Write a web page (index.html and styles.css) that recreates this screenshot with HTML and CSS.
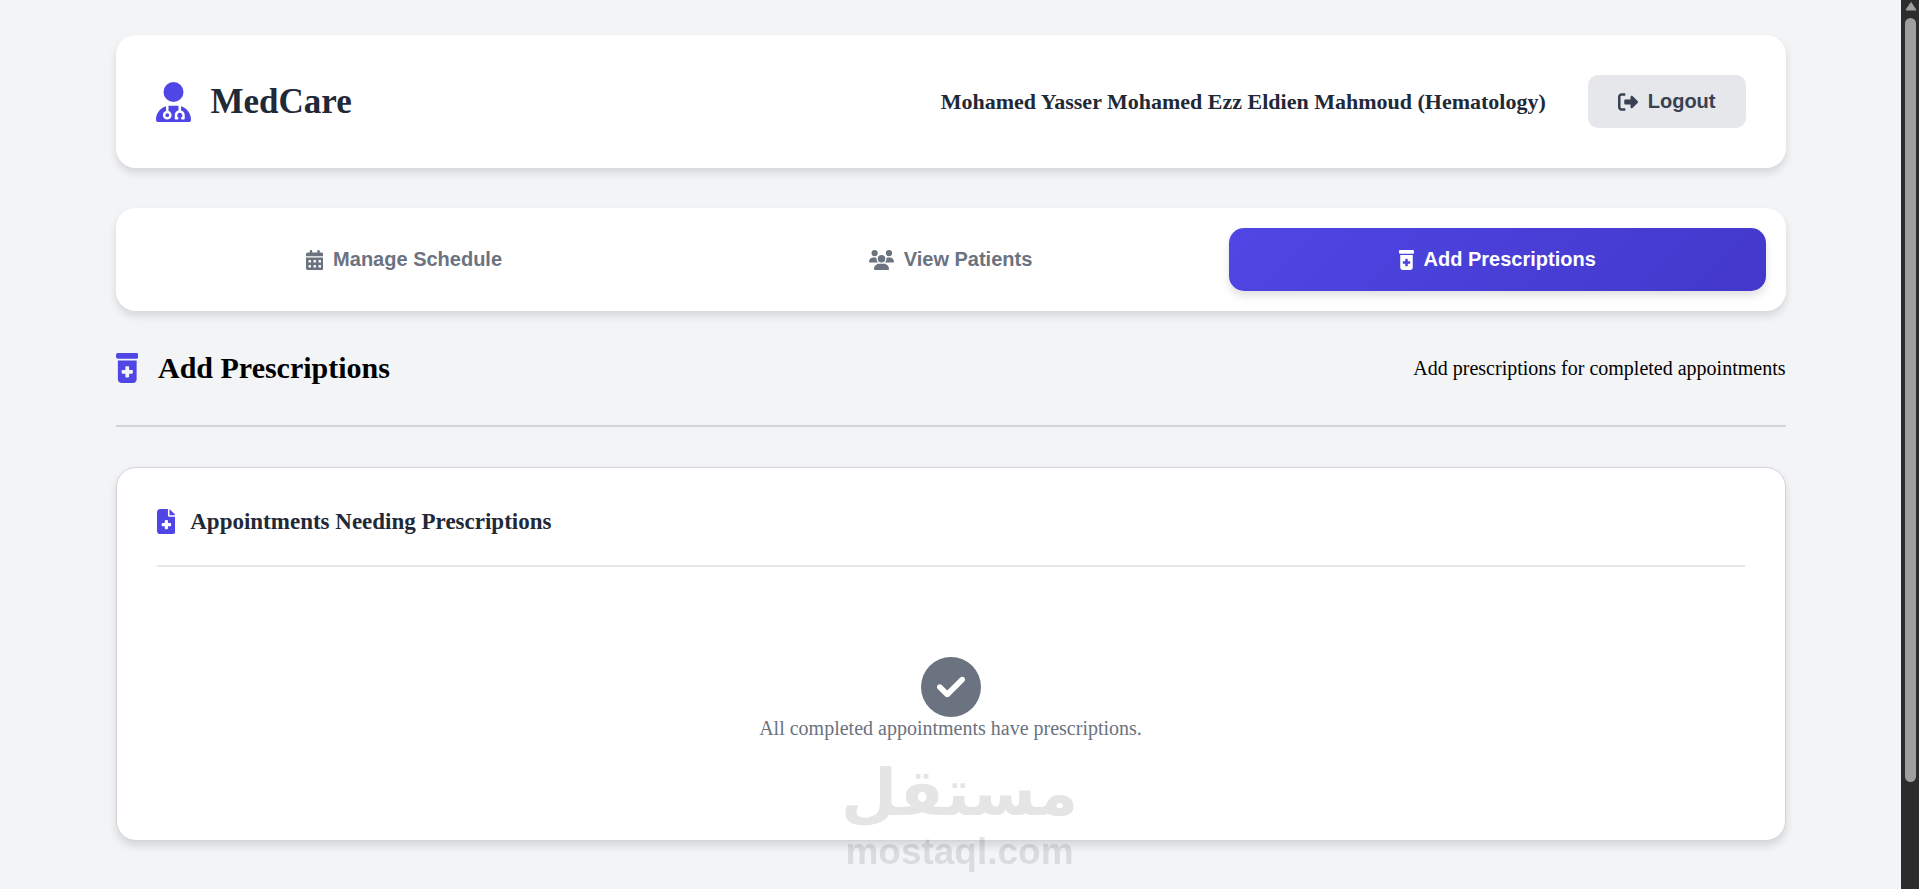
FILE: index.html
```html
<!DOCTYPE html>
<html lang="en">

<head>
    <meta charset="UTF-8">
    <meta name="viewport" content="width=device-width, initial-scale=1.0">
    <title>MedCare - Add Prescriptions</title>
    <link rel="stylesheet" href="styles.css">
</head>

<body>
    <div class="container">
        <header class="header">
            <div class="logo">
                <svg class="icon" viewBox="0 0 448 512" aria-hidden="true">
                    <path d="M224 256A128 128 0 1 0 224 0a128 128 0 1 0 0 256zm-96 55.2C54 332.9 0 401.3 0 482.3C0 498.7 13.3 512 29.7 512H418.3c16.4 0 29.7-13.3 29.7-29.7c0-81-54-149.4-128-171.1V362c27.6 7.1 48 32.2 48 62v40c0 8.8-7.2 16-16 16H336c-8.8 0-16-7.2-16-16s7.2-16 16-16V424c0-17.7-14.3-32-32-32s-32 14.3-32 32v24c8.8 0 16 7.2 16 16s-7.2 16-16 16H256c-8.8 0-16-7.2-16-16V424c0-29.8 20.4-54.9 48-62V304.9c-6-.6-12.1-.9-18.3-.9H178.3c-6.2 0-12.3 .3-18.3 .9v65.4c23.1 6.9 40 28.3 40 53.7c0 30.9-25.1 56-56 56s-56-25.1-56-56c0-25.4 16.9-46.8 40-53.7V311.2zM144 448a24 24 0 1 0 0-48 24 24 0 1 0 0 48z" />
                </svg>
                <h1>MedCare</h1>
            </div>
            <div class="user-info">
                <span class="user-name">Mohamed Yasser Mohamed Ezz Eldien Mahmoud (Hematology)</span>
                <button type="button" class="logout-btn">
                    <svg class="icon" viewBox="0 0 512 512" aria-hidden="true">
                        <path d="M377.9 105.9L500.7 228.7c7.2 7.2 11.3 17.1 11.3 27.3s-4.1 20.1-11.3 27.3L377.9 406.1c-6.4 6.4-15 9.9-24 9.9c-18.7 0-33.9-15.2-33.9-33.9l0-62.1-128 0c-17.7 0-32-14.3-32-32l0-64c0-17.7 14.3-32 32-32l128 0 0-62.1c0-18.7 15.2-33.9 33.9-33.9c9 0 17.6 3.6 24 9.9zM160 96L96 96c-17.7 0-32 14.3-32 32l0 256c0 17.7 14.3 32 32 32l64 0c17.7 0 32 14.3 32 32s-14.3 32-32 32l-64 0c-53 0-96-43-96-96L0 128C0 75 43 32 96 32l64 0c17.7 0 32 14.3 32 32s-14.3 32-32 32z" />
                    </svg>
                    Logout
                </button>
            </div>
        </header>

        <nav class="tabs">
            <button type="button" class="tab">
                <svg class="icon" viewBox="0 0 448 512" aria-hidden="true">
                    <path d="M128 0c17.7 0 32 14.3 32 32V64H288V32c0-17.7 14.3-32 32-32s32 14.3 32 32V64h48c26.5 0 48 21.5 48 48v48H0V112C0 85.5 21.5 64 48 64H96V32c0-17.7 14.3-32 32-32zM0 192H448V464c0 26.5-21.5 48-48 48H48c-26.5 0-48-21.5-48-48V192zm64 80v32c0 8.8 7.2 16 16 16h32c8.8 0 16-7.2 16-16V272c0-8.8-7.2-16-16-16H80c-8.8 0-16 7.2-16 16zm128 0v32c0 8.8 7.2 16 16 16h32c8.8 0 16-7.2 16-16V272c0-8.8-7.2-16-16-16H208c-8.8 0-16 7.2-16 16zm144-16c-8.8 0-16 7.2-16 16v32c0 8.8 7.2 16 16 16h32c8.8 0 16-7.2 16-16V272c0-8.8-7.2-16-16-16H336zM64 400v32c0 8.8 7.2 16 16 16h32c8.8 0 16-7.2 16-16V400c0-8.8-7.2-16-16-16H80c-8.8 0-16 7.2-16 16zm144-16c-8.8 0-16 7.2-16 16v32c0 8.8 7.2 16 16 16h32c8.8 0 16-7.2 16-16V400c0-8.8-7.2-16-16-16H208zm112 16v32c0 8.8 7.2 16 16 16h32c8.8 0 16-7.2 16-16V400c0-8.8-7.2-16-16-16H336c-8.8 0-16 7.2-16 16z" />
                </svg>
                Manage Schedule
            </button>
            <button type="button" class="tab">
                <svg class="icon" viewBox="0 0 640 512" aria-hidden="true">
                    <path d="M144 0a80 80 0 1 1 0 160A80 80 0 1 1 144 0zM512 0a80 80 0 1 1 0 160A80 80 0 1 1 512 0zM0 298.7C0 239.8 47.8 192 106.7 192h42.7c15.9 0 31 3.5 44.6 9.7c-1.3 7.2-1.9 14.7-1.9 22.3c0 38.2 16.8 72.5 43.3 96c-.2 0-.4 0-.7 0H21.3C9.6 320 0 310.4 0 298.7zM405.3 320c-.2 0-.4 0-.7 0c26.6-23.5 43.3-57.8 43.3-96c0-7.6-.7-15-1.9-22.3c13.6-6.3 28.7-9.7 44.6-9.7h42.7C592.2 192 640 239.8 640 298.7c0 11.8-9.6 21.3-21.3 21.3H405.3zM224 224a96 96 0 1 1 192 0 96 96 0 1 1 -192 0zM128 485.3C128 411.7 187.7 352 261.3 352H378.7C452.3 352 512 411.7 512 485.3c0 14.7-11.9 26.7-26.7 26.7H154.7c-14.7 0-26.7-11.9-26.7-26.7z" />
                </svg>
                View Patients
            </button>
            <button type="button" class="tab active">
                <svg class="icon" viewBox="0 0 384 512" aria-hidden="true">
                    <path d="M0 32C0 14.3 14.3 0 32 0H352c17.7 0 32 14.3 32 32V64c0 17.7-14.3 32-32 32H32C14.3 96 0 81.7 0 64V32zm32 96H352V448c0 35.3-28.7 64-64 64H96c-35.3 0-64-28.7-64-64V128zM160 240v48H112c-8.8 0-16 7.2-16 16v32c0 8.8 7.2 16 16 16h48v48c0 8.8 7.2 16 16 16h32c8.8 0 16-7.2 16-16V352h48c8.8 0 16-7.2 16-16V304c0-8.8-7.2-16-16-16H224V240c0-8.8-7.2-16-16-16H176c-8.8 0-16 7.2-16 16z" />
                </svg>
                Add Prescriptions
            </button>
        </nav>

        <main>
            <div class="section-header">
                <h2>
                    <svg class="icon" viewBox="0 0 384 512" aria-hidden="true">
                        <path d="M0 32C0 14.3 14.3 0 32 0H352c17.7 0 32 14.3 32 32V64c0 17.7-14.3 32-32 32H32C14.3 96 0 81.7 0 64V32zm32 96H352V448c0 35.3-28.7 64-64 64H96c-35.3 0-64-28.7-64-64V128zM160 240v48H112c-8.8 0-16 7.2-16 16v32c0 8.8 7.2 16 16 16h48v48c0 8.8 7.2 16 16 16h32c8.8 0 16-7.2 16-16V352h48c8.8 0 16-7.2 16-16V304c0-8.8-7.2-16-16-16H224V240c0-8.8-7.2-16-16-16H176c-8.8 0-16 7.2-16 16z" />
                    </svg>
                    Add Prescriptions
                </h2>
                <p>Add prescriptions for completed appointments</p>
            </div>

            <section class="card">
                <h3 class="card-title">
                    <svg class="icon" viewBox="0 0 384 512" aria-hidden="true">
                        <path d="M64 0C28.7 0 0 28.7 0 64V448c0 35.3 28.7 64 64 64H320c35.3 0 64-28.7 64-64V160H256c-17.7 0-32-14.3-32-32V0H64zM256 0V128H384L256 0zM160 240c0-8.8 7.2-16 16-16h32c8.8 0 16 7.2 16 16v48h48c8.8 0 16 7.2 16 16v32c0 8.8-7.2 16-16 16H224v48c0 8.8-7.2 16-16 16H176c-8.8 0-16-7.2-16-16V352H112c-8.8 0-16-7.2-16-16V304c0-8.8 7.2-16 16-16h48V240z" />
                    </svg>
                    Appointments Needing Prescriptions
                </h3>
                <div class="empty-state">
                    <svg class="icon" viewBox="0 0 512 512" aria-hidden="true">
                        <path d="M256 512A256 256 0 1 0 256 0a256 256 0 1 0 0 512zM369 209L241 337c-9.4 9.4-24.6 9.4-33.9 0l-64-64c-9.4-9.4-9.4-24.6 0-33.9s24.6-9.4 33.9 0l47 47L335 175c9.4-9.4 24.6-9.4 33.9 0s9.4 24.6 0 33.9z" />
                    </svg>
                    <p>All completed appointments have prescriptions.</p>
                </div>
            </section>
        </main>
    </div>

    <div class="watermark">
        <span class="watermark-ar" lang="ar" dir="rtl">مستقل</span>
        <span class="watermark-en">mostaql.com</span>
    </div>

    <div class="scrollbar" aria-hidden="true">
        <svg class="scroll-arrow" viewBox="0 0 12 10">
            <path d="M6 1.5L11 9H1z" />
        </svg>
        <div class="scroll-thumb"></div>
    </div>
</body>

</html>
```
FILE: styles.css
```css
* {
    box-sizing: border-box;
    margin: 0;
    padding: 0;
}

body {
    font-family: "Liberation Serif", "Times New Roman", serif;
    font-size: 20px;
    background-color: #f3f4f6;
    color: #000;
    padding-right: 18px;
    min-height: 100vh;
    overflow: hidden;
}

.container {
    max-width: 1750px;
    margin: 0 auto;
    padding: 35px 40px 40px;
}

.icon {
    display: block;
    flex-shrink: 0;
    width: auto;
    height: 20px;
    fill: currentColor;
}

/* Header */
.header {
    display: flex;
    justify-content: space-between;
    align-items: center;
    background: white;
    padding: 40px;
    margin-bottom: 40px;
    border-radius: 20px;
    box-shadow: 0 5px 8px rgba(0, 0, 0, 0.12);
}

.logo {
    display: flex;
    align-items: center;
    gap: 20px;
    color: #1f2937;
}

.logo .icon {
    height: 40px;
    color: #4f46e5;
}

.logo h1 {
    font-size: 35px;
    line-height: 40px;
}

.user-info {
    display: flex;
    align-items: center;
    gap: 42px;
}

.user-name {
    font-size: 22px;
    font-weight: bold;
    color: #1f2937;
}

.logout-btn,
.tab {
    display: flex;
    align-items: center;
    justify-content: center;
    gap: 10px;
    border: none;
    font-family: "Liberation Sans", Arial, sans-serif;
    font-size: 20px;
    font-weight: bold;
    line-height: 23px;
    cursor: pointer;
}

.logout-btn {
    padding: 15px 30px;
    border-radius: 10px;
    background-color: #e5e7eb;
    color: #374151;
}

/* Tabs */
.tabs {
    display: flex;
    gap: 10px;
    background: white;
    padding: 20px;
    margin-bottom: 40px;
    border-radius: 20px;
    box-shadow: 0 5px 8px rgba(0, 0, 0, 0.12);
}

.tab {
    flex: 1;
    padding: 20px;
    border-radius: 15px;
    background: transparent;
    color: #6b7280;
}

.tab.active {
    background: linear-gradient(135deg, #4f46e5, #4338ca);
    color: white;
    box-shadow: 0 5px 8px rgba(0, 0, 0, 0.12);
}

/* Section heading */
.section-header {
    display: flex;
    justify-content: space-between;
    align-items: center;
    padding-bottom: 40px;
    margin-bottom: 40px;
    border-bottom: 2px solid #d1d5db;
}

.section-header h2 {
    display: flex;
    align-items: center;
    gap: 20px;
    font-size: 30px;
    line-height: 34px;
}

.section-header .icon {
    height: 30px;
    color: #4f46e5;
}

/* Card */
.card {
    background: white;
    padding: 40px;
    border: 1px solid #d1d5db;
    border-radius: 20px;
    box-shadow: 0 5px 8px rgba(0, 0, 0, 0.12);
}

.card-title {
    display: flex;
    align-items: center;
    gap: 15px;
    padding-bottom: 30px;
    margin-bottom: 30px;
    border-bottom: 2px solid #e5e7eb;
    font-size: 23px;
    line-height: 27px;
    color: #1f2937;
}

.card-title .icon {
    height: 25px;
    color: #4f46e5;
}

.empty-state {
    display: flex;
    flex-direction: column;
    align-items: center;
    padding: 60px;
    color: #6b7280;
    line-height: 23px;
}

.empty-state .icon {
    height: 60px;
}

/* Watermark over the page */
.watermark {
    position: fixed;
    left: 0;
    right: 0;
    bottom: 16px;
    display: flex;
    flex-direction: column;
    align-items: center;
    font-weight: bold;
    color: #000;
    opacity: 0.1;
    pointer-events: none;
}

.watermark-ar {
    font-family: "DejaVu Sans", sans-serif;
    font-size: 65px;
    line-height: 76px;
}

.watermark-en {
    font-family: "Liberation Sans", Arial, sans-serif;
    font-size: 37px;
    line-height: 42px;
}

/* Scrollbar */
.scrollbar {
    position: fixed;
    top: 0;
    right: 0;
    bottom: 0;
    width: 18px;
    padding: 1px 2px 0 4px;
    background-color: #2c2c2c;
}

.scroll-arrow {
    display: block;
    width: 12px;
    height: 10px;
    margin-bottom: 7px;
    fill: #9f9f9f;
    stroke: #9f9f9f;
    stroke-width: 1px;
    stroke-linejoin: round;
}

.scroll-thumb {
    width: 11px;
    height: 86%;
    border-radius: 6px;
    background-color: #9f9f9f;
}
```
